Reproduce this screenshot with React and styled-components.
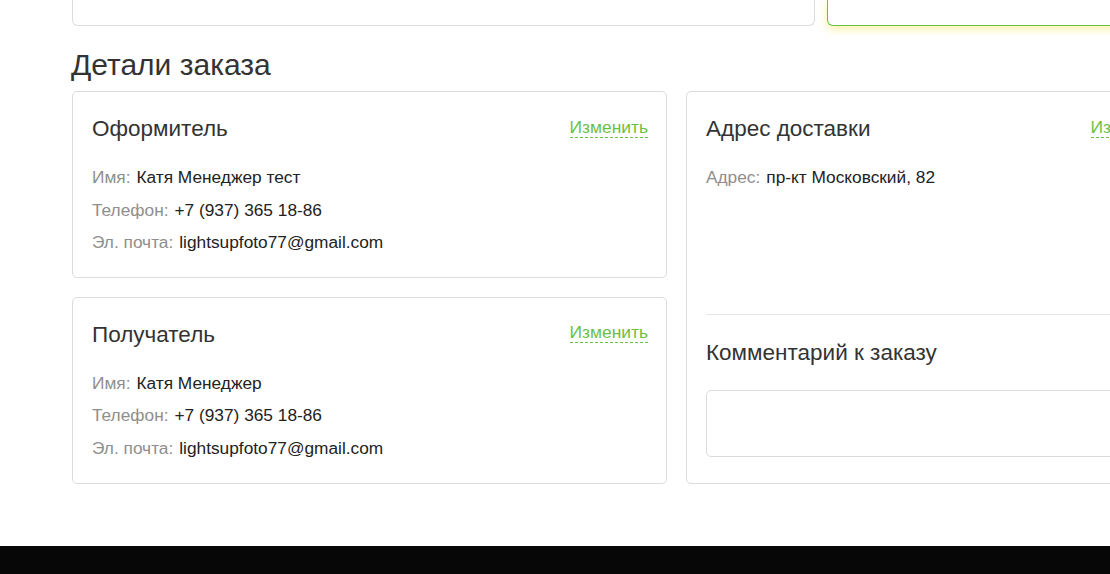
import React from 'react';
import styled, { createGlobalStyle } from 'styled-components';

const GlobalStyle = createGlobalStyle`
  html, body {
    margin: 0;
    padding: 0;
    background: #fff;
    overflow: hidden;
  }
  body {
    font-family: "Liberation Sans", Arial, sans-serif;
    color: #333;
  }
`;

const Page = styled.div`
  width: 1110px;
  height: 574px;
  display: flex;
  flex-direction: column;
  overflow: hidden;
`;

const Content = styled.div`
  flex: 1;
  padding-left: 72px;
  width: 1120px;
  box-sizing: content-box;
`;

const TopRow = styled.div`
  display: flex;
  gap: 12px;
  height: 26px;
`;

const TopCard = styled.div`
  box-sizing: border-box;
  height: 26px;
  border: 1px solid ${(p) => (p.$active ? '#6abf40' : '#dcdcdc')};
  border-top: none;
  border-radius: 0 0 6px 6px;
  width: ${(p) => p.$width}px;
  flex-shrink: 0;
  background: #fff;
  box-shadow: ${(p) => (p.$active ? '0 3px 10px rgba(255, 224, 60, 0.45)' : 'none')};
`;

const Heading = styled.h2`
  margin: 21px 0 8px -1px;
  font-size: 30px;
  line-height: 36px;
  font-weight: 400;
  color: #333;
`;

const Grid = styled.div`
  display: grid;
  grid-template-columns: 595px 502px;
  column-gap: 19px;
  align-items: stretch;
`;

const Column = styled.div`
  display: flex;
  flex-direction: column;
  gap: 19px;
`;

const Card = styled.div`
  box-sizing: border-box;
  border: 1px solid #dcdcdc;
  border-radius: 5px;
  background: #fff;
  padding: 21px 18px ${(p) => p.$bottom || 18}px 19px;
  display: flex;
  flex-direction: column;
`;

const CardHeader = styled.div`
  display: flex;
  align-items: center;
  justify-content: space-between;
  height: 32px;
  margin-bottom: 16px;
`;

const CardTitle = styled.h3`
  margin: 0;
  font-size: 22.5px;
  font-weight: 400;
  color: #333;
  line-height: 32px;
  white-space: nowrap;
`;

const EditLink = styled.a`
  font-size: 17.4px;
  color: #6cbf45;
  text-decoration: none;
  border-bottom: 1px dashed #6cbf45;
  line-height: 20px;
  cursor: pointer;
  margin-top: -4px;
  white-space: nowrap;
`;

const Row = styled.div`
  font-size: 17.3px;
  line-height: 32.5px;
  color: #222;
  white-space: nowrap;
`;

const Label = styled.span`
  color: #8e8e8e;
  margin-right: 6px;
`;

const AddressPart = styled.div`
  flex: 1;
`;

const CommentPart = styled.div`
  border-top: 1px solid #e6e6e6;
  padding-top: 22px;
`;

const CommentTitle = styled(CardTitle)`
  margin-bottom: 21px;
`;

const CommentBox = styled.textarea`
  display: block;
  box-sizing: border-box;
  width: calc(100% + 20px);
  height: 67px;
  border: 1px solid #dcdcdc;
  border-radius: 5px;
  resize: none;
  font-family: inherit;
  font-size: 16px;
  outline: none;
`;

const Footer = styled.div`
  height: 28px;
  background: #070707;
  flex-shrink: 0;
`;

function PersonCard({ title, name, phone, email, bottom }) {
  return (
    <Card $bottom={bottom}>
      <CardHeader>
        <CardTitle>{title}</CardTitle>
        <EditLink>Изменить</EditLink>
      </CardHeader>
      <Row>
        <Label>Имя:</Label>
        {name}
      </Row>
      <Row>
        <Label>Телефон:</Label>
        {phone}
      </Row>
      <Row>
        <Label>Эл. почта:</Label>
        {email}
      </Row>
    </Card>
  );
}

export default function App() {
  return (
    <Page>
      <GlobalStyle />
      <Content>
        <TopRow>
          <TopCard $width={743} />
          <TopCard $width={455} $active />
        </TopRow>
        <Heading>Детали заказа</Heading>
        <Grid>
          <Column>
            <PersonCard
              title="Оформитель"
              name="Катя Менеджер тест"
              phone="+7 (937) 365 18-86"
              email="lightsupfoto77@gmail.com"
            />
            <PersonCard
              title="Получатель"
              name="Катя Менеджер"
              phone="+7 (937) 365 18-86"
              email="lightsupfoto77@gmail.com"
              bottom={19}
            />
          </Column>
          <Card $bottom={26}>
            <AddressPart>
              <CardHeader>
                <CardTitle>Адрес доставки</CardTitle>
                <EditLink>Изменить</EditLink>
              </CardHeader>
              <Row>
                <Label>Адрес:</Label>
                пр-кт Московский, 82
              </Row>
            </AddressPart>
            <CommentPart>
              <CommentTitle>Комментарий к заказу</CommentTitle>
              <CommentBox />
            </CommentPart>
          </Card>
        </Grid>
      </Content>
      <Footer />
    </Page>
  );
}
